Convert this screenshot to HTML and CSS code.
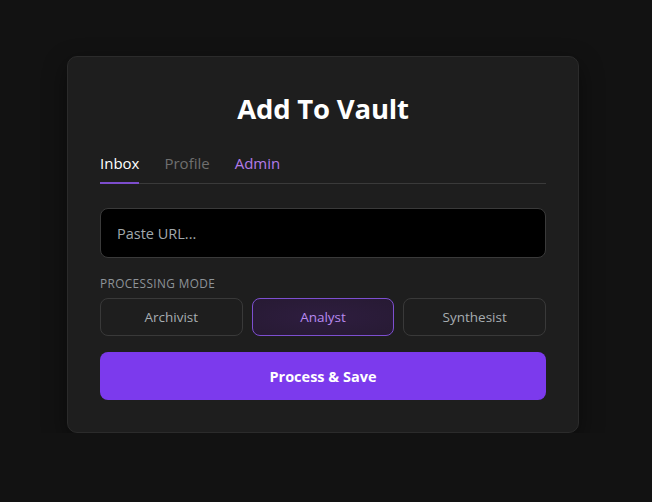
FILE: index.html
```html
<!DOCTYPE html>
<html lang="en">
<head>
<meta charset="utf-8">
<title>Add To Vault</title>
<link rel="stylesheet" href="styles.css">
</head>
<body>
<main class="page">
  <section class="card">
    <h1 class="title">Add To Vault</h1>
    <nav class="tabs">
      <span class="tab tab-active">Inbox</span>
      <span class="tab tab-muted">Profile</span>
      <span class="tab tab-admin">Admin</span>
    </nav>
    <input class="url-input" type="text" placeholder="Paste URL...">
    <div class="mode-label">PROCESSING MODE</div>
    <div class="modes">
      <button class="mode">Archivist</button>
      <button class="mode mode-active">Analyst</button>
      <button class="mode">Synthesist</button>
    </div>
    <button class="submit">Process &amp; Save</button>
  </section>
</main>
</body>
</html>
```

FILE: styles.css
```css
* { box-sizing: border-box; }
html, body {
  margin: 0;
  padding: 0;
  background: #121212;
  font-family: "Open Sans", "Noto Sans", "Liberation Sans", sans-serif;
  color: #fff;
}
.page {
  display: flex;
  justify-content: center;
  padding-top: 56px;
  padding-right: 6px;
}
.card {
  width: 512px;
  background: #1e1e1e;
  border: 1px solid #2b2b2b;
  border-radius: 10px;
  padding: 28px 32px 32px;
  box-shadow: 0 8px 24px rgba(0,0,0,0.45);
  display: flex;
  flex-direction: column;
}
.title {
  margin: 0;
  text-align: center;
  font-size: 27.5px;
  font-weight: 700;
  line-height: 48px;
  color: #fff;
  letter-spacing: -0.2px;
}
.tabs {
  display: flex;
  gap: 25px;
  margin-top: 20px;
  border-bottom: 1px solid #3a3a3a;
}
.tab {
  font-size: 15px;
  line-height: 20px;
  padding-bottom: 9px;
  border-bottom: 2px solid transparent;
  margin-bottom: -1px;
}
.tab-active { color: #fff; border-bottom-color: #7c4dcc; }
.tab-muted { color: #6f6f6f; }
.tab-admin { color: #b17be8; }
.url-input {
  margin-top: 24px;
  height: 50px;
  width: 100%;
  background: #000;
  border: 1px solid #3a3a3a;
  border-radius: 8px;
  padding: 0 16px;
  font-family: inherit;
  font-size: 14.5px;
  color: #fff;
  outline: none;
}
.url-input::placeholder { color: #a2a9ad; }
.mode-label {
  margin-top: 17px;
  font-size: 11.8px;
  letter-spacing: 0.4px;
  color: #8e9499;
  line-height: 16px;
}
.modes {
  display: grid;
  grid-template-columns: repeat(3, 1fr);
  gap: 9px;
  margin-top: 7px;
}
.mode {
  height: 38px;
  background: transparent;
  border: 1px solid #393939;
  border-radius: 8px;
  color: #a7adb1;
  font-family: inherit;
  font-size: 13.5px;
}
.mode-active {
  border-color: #7d4fd0;
  color: #b88af0;
  background: radial-gradient(ellipse at center, #2e1d3f 0%, #271a33 100%);
}
.submit {
  margin-top: 16px;
  height: 48px;
  width: 100%;
  border: none;
  border-radius: 8px;
  background: #7c3aed;
  color: #fff;
  font-family: inherit;
  font-weight: 700;
  font-size: 14.5px;
}
```
